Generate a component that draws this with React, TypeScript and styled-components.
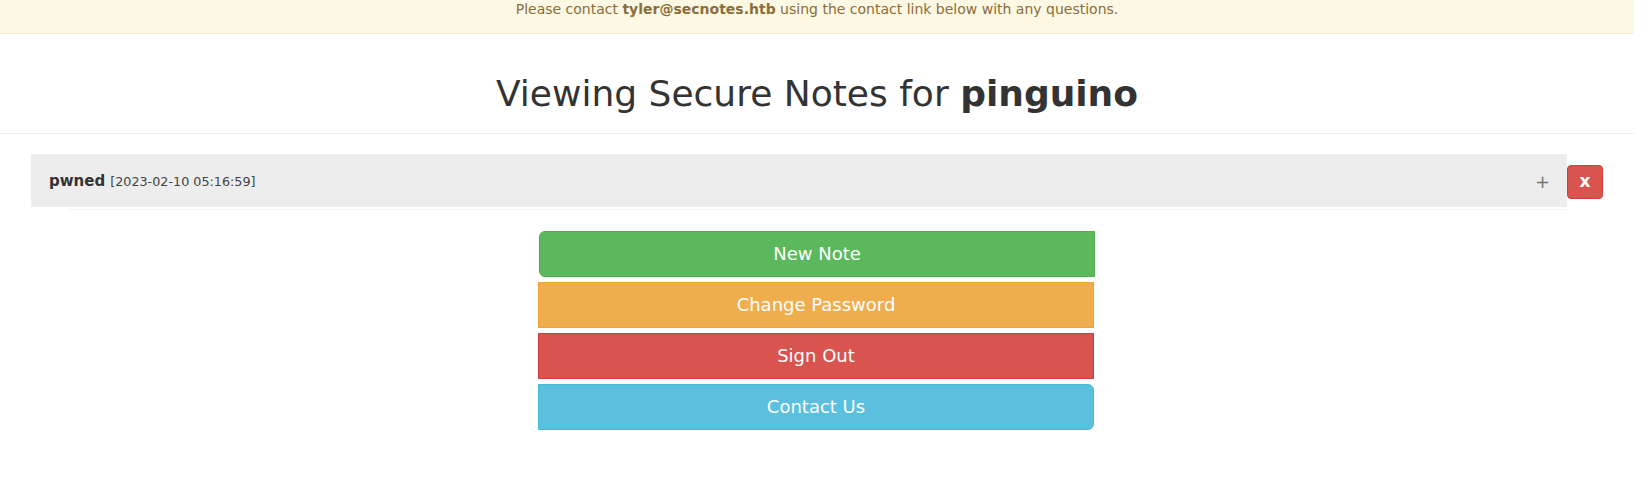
import React from "react";
import styled, { createGlobalStyle } from "styled-components";

const Global = createGlobalStyle`
  html, body { margin: 0; padding: 0; background: #fff; }
  body { font-family: "DejaVu Sans", sans-serif; color: #333; }
`;

const Page = styled.div`
  width: 1634px;
`;

const Banner = styled.div`
  height: 33px;
  background: #fcf8e3;
  border-bottom: 1px solid #faebcc;
  color: #8a6d3b;
  font-size: 14px;
  line-height: 18px;
  text-align: center;
  box-sizing: content-box;
  b { font-weight: bold; }
`;

const Header = styled.div`
  margin: 0 0 20px;
  padding: 0 0 9px;
  border-bottom: 1px solid #eee;
`;

const Title = styled.h1`
  margin: 40px 0 10px;
  font-size: 36px;
  line-height: 1.1;
  font-weight: normal;
  text-align: center;
  color: #333;
  b { font-weight: bold; }
`;

const NotesArea = styled.div`
  padding: 0 31px;
`;

const NoteRow = styled.div`
  display: flex;
  align-items: flex-start;
`;

const NotePanel = styled.div`
  flex: 1;
`;

const NoteHeading = styled.div`
  height: 53px;
  box-sizing: border-box;
  background: #ededed;
  display: flex;
  align-items: center;
  padding: 2px 17px 0 18px;
  font-size: 15px;
`;

const NoteName = styled.span`
  font-weight: bold;
  color: #333;
`;

const NoteDate = styled.small`
  font-size: 85%;
  margin-left: 5px;
  color: #444;
`;

const Expand = styled.span`
  margin-left: auto;
  color: #777;
  font-size: 18px;
`;

const NoteBody = styled.div`
  margin-left: 37px;
  height: 2px;
  border-bottom: 1px solid #f4f4f4;
`;

const DeleteBtn = styled.button`
  width: 36px;
  height: 34px;
  margin-top: 11px;
  background: #d9534f;
  border: 1px solid #d43f3a;
  border-radius: 4px;
  color: #fff;
  font-family: "DejaVu Sans", sans-serif;
  font-weight: bold;
  font-size: 17px;
  padding: 0;
  line-height: 1;
`;

const Actions = styled.div`
  width: 556px;
  margin: 21px 0 0 calc(50% - 279px);
  display: flex;
  flex-direction: column;
  gap: 5px;
`;

const colors = {
  success: ["#5cb85c", "#4cae4c"],
  warning: ["#f0ad4e", "#eea236"],
  danger: ["#d9534f", "#d43f3a"],
  info: ["#5bc0de", "#46b8da"],
} as const;

const ActionBtn = styled.button<{ $kind: keyof typeof colors; $radius: string; $shift?: number }>`
  height: 46px;
  box-sizing: border-box;
  width: 100%;
  margin-left: ${(p) => p.$shift ?? 0}px;
  background: ${(p) => colors[p.$kind][0]};
  border: 1px solid ${(p) => colors[p.$kind][1]};
  border-radius: ${(p) => p.$radius};
  color: #fff;
  font-family: "DejaVu Sans", sans-serif;
  font-size: 18px;
  line-height: 24px;
  padding: 10px 16px;
  text-align: center;
`;

export default function App() {
  return (
    <Page>
      <Global />
      <Banner>
        Please contact <b>tyler@secnotes.htb</b> using the contact link below with any questions.
      </Banner>
      <Header>
        <Title>
          Viewing Secure Notes for <b>pinguino</b>
        </Title>
      </Header>
      <NotesArea>
        <NoteRow>
          <NotePanel>
            <NoteHeading>
              <NoteName>pwned</NoteName>
              <NoteDate>[2023-02-10 05:16:59]</NoteDate>
              <Expand>+</Expand>
            </NoteHeading>
            <NoteBody />
          </NotePanel>
          <DeleteBtn>x</DeleteBtn>
        </NoteRow>
      </NotesArea>
      <Actions>
        <ActionBtn $kind="success" $radius="6px 0 0 6px" $shift={1}>New Note</ActionBtn>
        <ActionBtn $kind="warning" $radius="0">Change Password</ActionBtn>
        <ActionBtn $kind="danger" $radius="0">Sign Out</ActionBtn>
        <ActionBtn $kind="info" $radius="0 6px 6px 0">Contact Us</ActionBtn>
      </Actions>
    </Page>
  );
}
